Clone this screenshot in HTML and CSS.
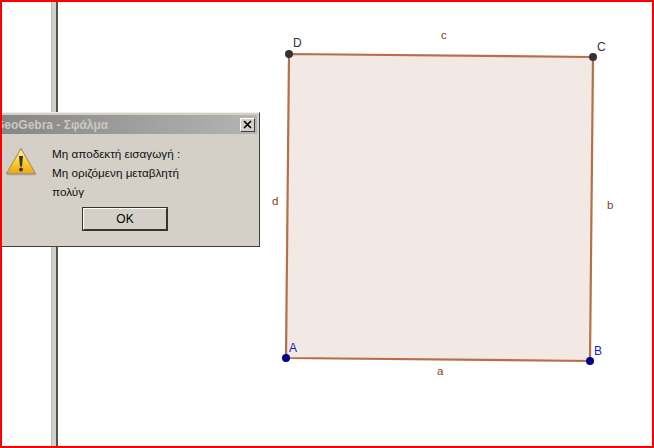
FILE: index.html
```html
<!DOCTYPE html>
<html lang="el">
<head>
    <meta charset="UTF-8">
    <title>GeoGebra</title>
    <link rel="stylesheet" href="styles.css">
</head>
<body>
    <div class="frame">
        <div class="side-pane"></div>
        <div class="divider"></div>

        <!-- viewBox keeps the drawing in window coordinates -->
        <svg class="canvas" viewBox="58 2 594 444">
            <polygon class="square" points="286,358 590,361 593,57 289,54" />
            <text class="seg" x="437" y="375">a</text>
            <text class="seg" x="607" y="209">b</text>
            <text class="seg" x="441" y="39">c</text>
            <text class="seg" x="272" y="205">d</text>
            <circle class="pt-free" cx="286" cy="358" r="4" />
            <circle class="pt-free" cx="590" cy="361" r="4" />
            <circle class="pt-dep" cx="593" cy="57" r="4" />
            <circle class="pt-dep" cx="289" cy="54" r="4" />
            <text class="lbl-free" x="289" y="352">A</text>
            <text class="lbl-free" x="594" y="355">B</text>
            <text class="lbl-dep" x="597" y="51">C</text>
            <text class="lbl-dep" x="293" y="47">D</text>
        </svg>

        <div class="dialog">
            <div class="titlebar">
                <span class="title">GeoGebra - Σφάλμα</span>
                <span class="close">
                    <svg width="9" height="9" viewBox="0 0 9 9"><path d="M1 1L8 8M8 1L1 8" stroke="#000" stroke-width="1.6" /></svg>
                </span>
            </div>
            <div class="dialog-body">
                <svg class="warn" width="32" height="29" viewBox="0 0 32 29">
                    <defs>
                        <linearGradient id="warnFill" x1="0" y1="0" x2="0" y2="1">
                            <stop offset="0" stop-color="#fff3a8" />
                            <stop offset="0.55" stop-color="#fbd02c" />
                            <stop offset="1" stop-color="#eda80f" />
                        </linearGradient>
                    </defs>
                    <path d="M16 1.5L30.5 26.5H1.5Z" fill="url(#warnFill)" stroke="#a8946a" stroke-width="1.2" stroke-linejoin="round" />
                    <path d="M2 27.5H30.5" stroke="#aaa69c" stroke-width="1.5" />
                    <path d="M14 9H18L17 19.5H15Z" fill="#3a3020" />
                    <circle cx="16" cy="22.5" r="1.9" fill="#3a3020" />
                </svg>
                <div class="message">
                    <p>Μη αποδεκτή εισαγωγή :</p>
                    <p>Μη οριζόμενη μεταβλητή</p>
                    <p>πολύγ</p>
                </div>
            </div>
            <button class="btn">OK</button>
        </div>
    </div>
</body>
</html>
```

FILE: styles.css
```css
html, body {
    margin: 0;
    padding: 0;
}
body {
    width: 654px;
    height: 448px;
    overflow: hidden;
    background: #fff;
    font-family: "Liberation Sans", Arial, sans-serif;
}
.frame {
    position: relative;
    display: flex;
    box-sizing: border-box;
    width: 654px;
    height: 448px;
    border: 2px solid #f00;
    overflow: hidden;
    background: #fff;
}
.side-pane {
    width: 49px;
}
.divider {
    box-sizing: border-box;
    width: 7px;
    background: #d2d0cb;
    border-left: 1px solid #bdbdb8;
    border-right: 2px solid #55554f;
}
.canvas {
    display: block;
    width: 594px;
    height: 444px;
}
.square {
    fill: #f3e9e4;
    stroke: #b5704a;
    stroke-width: 2.2;
}
.seg {
    font-size: 11.5px;
    fill: #8a3c12;
}
.pt-free {
    fill: #00008c;
}
.pt-dep {
    fill: #333;
}
.lbl-free {
    font-size: 12px;
    fill: #1a1ac8;
}
.lbl-dep {
    font-size: 12px;
    fill: #333;
}
.dialog {
    position: absolute;
    left: -10px;
    top: 110px;
    box-sizing: border-box;
    width: 268px;
    height: 135px;
    padding: 2px;
    background: #d4d0c8;
    border-top: 1px solid #f0eee8;
    border-right: 1px solid #404040;
    border-bottom: 1px solid #404040;
}
.titlebar {
    display: flex;
    align-items: center;
    justify-content: space-between;
    height: 19px;
    padding: 0 2px 0 1px;
    background: linear-gradient(to right, #858585, #b4b4b4);
}
.title {
    font-size: 12px;
    font-weight: bold;
    color: #cbc8c1;
}
.close {
    display: flex;
    align-items: center;
    justify-content: center;
    box-sizing: border-box;
    width: 15px;
    height: 14px;
    background: #d4d0c8;
    border: 1px solid;
    border-color: #fff #404040 #404040 #fff;
}
.dialog-body {
    display: flex;
    padding: 10px 0 0 11px;
}
.warn {
    margin-top: 3px;
}
.message {
    margin-left: 15px;
    font-size: 11.7px;
    line-height: 19px;
    color: #111;
}
.message p {
    margin: 0;
}
.btn {
    display: block;
    box-sizing: border-box;
    width: 84px;
    height: 22px;
    margin: 7px 0 0 89px;
    padding: 0;
    font-family: inherit;
    font-size: 12px;
    color: #000;
    background: #d4d0c8;
    border: 1px solid;
    border-color: #fff #333 #333 #fff;
    box-shadow: 0 0 0 1px #333;
}
```
